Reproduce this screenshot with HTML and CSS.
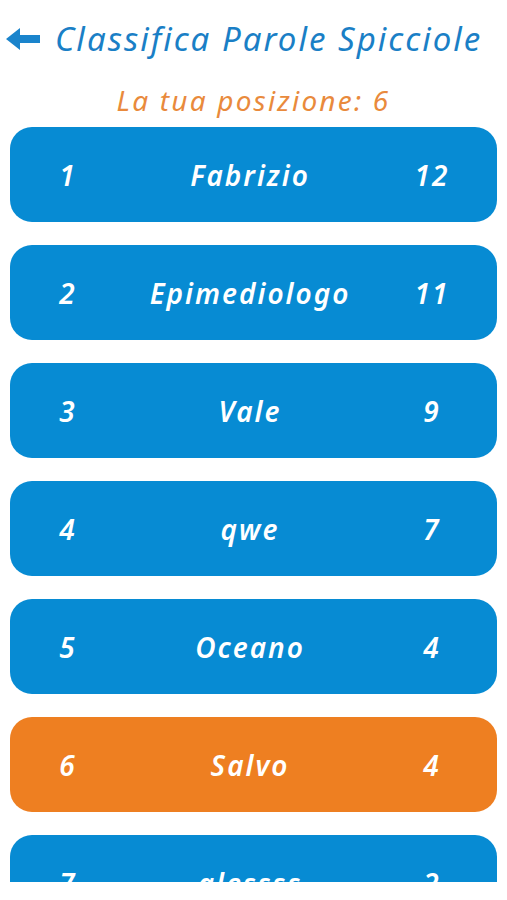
FILE: index.html
```html
<!DOCTYPE html>
<html lang="it">
<head>
<meta charset="utf-8">
<title>Classifica Parole Spicciole</title>
<link rel="stylesheet" href="styles.css">
</head>
<body>
<div class="screen">
  <header class="topbar">
    <svg class="back" width="36" height="24" viewBox="0 0 36 24" aria-hidden="true">
      <path d="M1 12 L15 1 L15 8 L35 8 L35 16 L15 16 L15 23 Z" fill="#1a84cc"/>
    </svg>
    <h1 class="title">Classifica Parole Spicciole</h1>
  </header>
  <p class="position">La tua posizione: 6</p>
  <div class="list">
    <div class="row"><span class="rank">1</span><span class="name">Fabrizio</span><span class="score">12</span></div>
    <div class="row"><span class="rank">2</span><span class="name">Epimediologo</span><span class="score">11</span></div>
    <div class="row"><span class="rank">3</span><span class="name">Vale</span><span class="score">9</span></div>
    <div class="row"><span class="rank">4</span><span class="name">qwe</span><span class="score">7</span></div>
    <div class="row"><span class="rank">5</span><span class="name">Oceano</span><span class="score">4</span></div>
    <div class="row row-me"><span class="rank">6</span><span class="name">Salvo</span><span class="score">4</span></div>
    <div class="row"><span class="rank">7</span><span class="name">alessss</span><span class="score">2</span></div>
  </div>
</div>
</body>
</html>
```
FILE: styles.css
```css
html, body {
  margin: 0;
  padding: 0;
  background: #ffffff;
}
body {
  font-family: "Noto Sans", "Open Sans", sans-serif;
  font-style: italic;
}
.screen {
  width: 507px;
  height: 900px;
  display: flex;
  flex-direction: column;
}
.topbar {
  display: flex;
  align-items: center;
  height: 76px;
  padding-left: 5px;
  box-sizing: border-box;
}
.back {
  flex: none;
  margin-right: 14px;
  margin-top: 2px;
}
.title {
  margin: 0;
  font-size: 33px;
  font-weight: 400;
  color: #1a7fc6;
  letter-spacing: 2px;
  white-space: nowrap;
}
.position {
  margin: 0;
  height: 51px;
  line-height: 48px;
  text-align: center;
  font-size: 28px;
  color: #e98a3c;
  letter-spacing: 2.2px;
}
.list {
  height: 755px;
  overflow: hidden;
  padding: 0 10px;
  display: flex;
  flex-direction: column;
  gap: 23px;
}
.row {
  flex: none;
  height: 95px;
  border-radius: 22px;
  background: #078bd3;
  color: #ffffff;
  display: grid;
  grid-template-columns: 80px 1fr 80px;
  align-items: center;
  padding: 0 25px 0 18px;
  font-size: 28px;
  font-weight: 600;
  letter-spacing: 2px;
}
.row-me {
  background: #ee7f21;
}
.rank, .score, .name {
  text-align: center;
  white-space: nowrap;
}
```
